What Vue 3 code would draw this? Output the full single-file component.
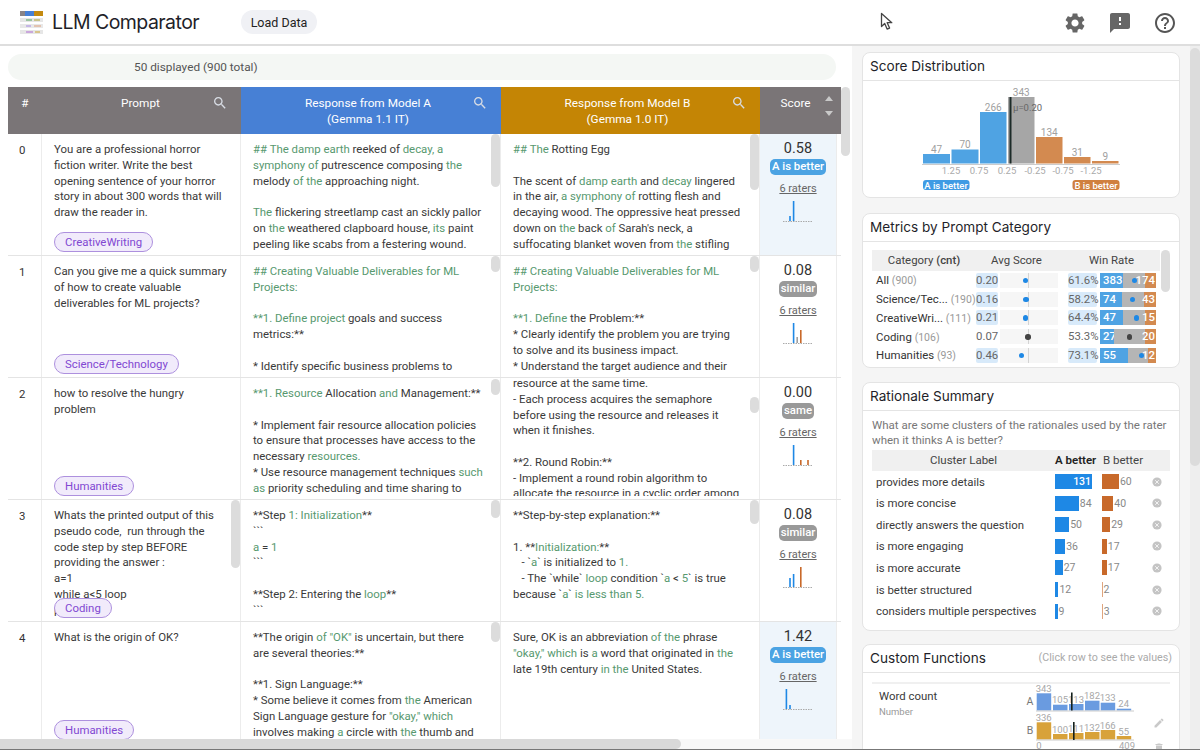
<script setup>
const searchPath = 'M15.5 14h-.79l-.28-.27C15.41 12.59 16 11.11 16 9.5 16 5.91 13.09 3 9.5 3S3 5.91 3 9.5 5.91 16 9.5 16c1.61 0 3.09-.59 4.23-1.57l.27.28v.79l5 4.99L20.49 19l-4.99-5zm-6 0C7.01 14 5 11.99 5 9.5S7.01 5 9.5 5 14 7.01 14 9.5 11.99 14 9.5 14z'

const BLUE = '#1e88e5'
const GRAY = '#a0a0a0'
const ORANGE = '#c8692a'

const rows = [
  {
    id: 0,
    prompt: 'You are a professional horror\nfiction writer. Write the best\nopening sentence of your horror\nstory in about 300 words that will\ndraw the reader in.',
    tag: 'CreativeWriting',
    a: '{## The damp earth} reeked of {decay, a}\n{symphony of} putrescence composing {the}\nmelody {of the} approaching night.\n\n{The} flickering streetlamp cast an sickly pallor\non {the} weathered clapboard house, {its} paint\npeeling like scabs from a festering wound.',
    b: '{## The} Rotting Egg\n\nThe scent of {damp earth} and {decay} lingered\nin the air, {a symphony of} rotting flesh and\ndecaying wood. The oppressive heat pressed\ndown on {the} back {of} Sarah\'s neck, a\nsuffocating blanket woven from {the} stifling',
    aBar: 53, bBar: 56,
    score: '0.58', verdict: 'A is better', kind: 'win',
    hist: [[1, 5, BLUE], [2, 20, BLUE]],
  },
  {
    id: 1,
    prompt: 'Can you give me a quick summary\nof how to create valuable\ndeliverables for ML projects?',
    tag: 'Science/Technology',
    a: '{## Creating Valuable Deliverables for ML}\n{Projects:}\n\n{**1. Define project} goals and success\nmetrics:**\n\n* Identify specific business problems to',
    b: '{## Creating Valuable Deliverables for ML}\n{Projects:}\n\n{**1. Define} the Problem:**\n* Clearly identify the problem you are trying\nto solve and its business impact.\n* Understand the target audience and their',
    aBar: 16, bBar: 16,
    score: '0.08', verdict: 'similar', kind: 'neutral',
    hist: [[2, 20, BLUE], [3, 6, GRAY], [4, 13, ORANGE]],
  },
  {
    id: 2,
    prompt: 'how to resolve the hungry\nproblem',
    tag: 'Humanities',
    a: '{**1. Resource} Allocation {and} Management:**\n\n* Implement fair resource allocation policies\nto ensure that processes have access to the\nnecessary {resources.}\n* Use resource management techniques {such}\n{as} priority scheduling and time sharing to',
    b: 'resource at the same time.\n- Each process acquires the semaphore\nbefore using the resource and releases it\nwhen it finishes.\n\n**2. Round Robin:**\n- Implement a round robin algorithm to\nallocate the resource in a cyclic order among',
    scrolled: true,
    aBar: 16, aBarTop: 1, bBar: 16, bBarTop: 19,
    score: '0.00', verdict: 'same', kind: 'neutral',
    hist: [[2, 20, BLUE], [4, 5, ORANGE], [6, 5, ORANGE]],
  },
  {
    id: 3,
    prompt: 'Whats the printed output of this\npseudo code,  run through the\ncode step by step BEFORE\nproviding the answer :\na=1\nwhile a<5 loop\nprint a',
    promptBar: 68,
    tag: 'Coding',
    a: '**Step {1: Initialization}**\n```\n{a} = {1}\n```\n\n**Step 2: Entering the {loop}**\n```',
    b: '**Step-by-step explanation:**\n\n1. **{Initialization:}**\n   - `{a}` is initialized to {1.}\n   - The `while` {loop} condition `{a} < {5}` is true\nbecause `{a}` {is less than 5.}',
    aBar: 18, bBar: 24,
    score: '0.08', verdict: 'similar', kind: 'neutral',
    hist: [[1, 9, BLUE], [2, 13, BLUE], [4, 20, ORANGE]],
  },
  {
    id: 4,
    prompt: 'What is the origin of OK?',
    tag: 'Humanities',
    a: '**The origin {of "OK"} is uncertain, but there\nare several theories:**\n\n**1. Sign Language:**\n* Some believe it comes from {the} American\nSign Language gesture for {"okay," which}\ninvolves making {a} circle with {the} thumb and',
    b: 'Sure, OK is an abbreviation {of the} phrase\n{"okay," which} is {a} word that originated in {the}\nlate 19th century {in the} United States.',
    aBar: 20,
    score: '1.42', verdict: 'A is better', kind: 'win',
    hist: [[0, 20, BLUE], [1, 4, BLUE]],
  },
]

function segments(text) {
  return text.split(/(\{[^}]*\})/).filter(Boolean).map(s =>
    s[0] === '{' ? { text: s.slice(1, -1), hi: true } : { text: s, hi: false })
}

const distBars = [
  { x: 923, w: 27, y: 153, v: '47', c: '#4fa3e3' },
  { x: 951.5, w: 27, y: 148.5, v: '70', c: '#4fa3e3' },
  { x: 980, w: 26.5, y: 111, v: '266', c: '#4fa3e3' },
  { x: 1008, w: 26.5, y: 96, v: '343', c: '#a6a6a6' },
  { x: 1036, w: 26.5, y: 136, v: '134', c: '#d38a50' },
  { x: 1064, w: 26.5, y: 156, v: '31', c: '#d38a50' },
  { x: 1092, w: 26.5, y: 160, v: '9', c: '#d38a50' },
]
const distTicks = [[951, '1.25'], [979, '0.75'], [1007, '0.25'], [1035, '-0.25'], [1063, '-0.75'], [1091, '-1.25']]

const categories = [
  { name: 'All', cnt: 900, avg: '0.20', hi: true, dot: 22.5, pct: '61.6%', a: 383, b: 174, aw: 23, bw: 11, win: 34, dark: false },
  { name: 'Science/Tec...', cnt: 190, avg: '0.16', hi: true, dot: 23, pct: '58.2%', a: 74, b: 43, aw: 22, bw: 12.5, win: 32, dark: false },
  { name: 'CreativeWri...', cnt: 111, avg: '0.21', hi: true, dot: 22.5, pct: '64.4%', a: 47, b: 15, aw: 23, bw: 11, win: 36, dark: false },
  { name: 'Coding', cnt: 106, avg: '0.07', hi: false, dot: 25, pct: '53.3%', a: 27, b: 20, aw: 14, bw: 11, win: 29, dark: true },
  { name: 'Humanities', cnt: 93, avg: '0.46', hi: true, dot: 18.5, pct: '73.1%', a: 55, b: 12, aw: 27.5, bw: 8, win: 41, dark: false },
]

const clusters = [
  { label: 'provides more details', a: 131, b: 60 },
  { label: 'is more concise', a: 84, b: 40 },
  { label: 'directly answers the question', a: 50, b: 29 },
  { label: 'is more engaging', a: 36, b: 17 },
  { label: 'is more accurate', a: 27, b: 17 },
  { label: 'is better structured', a: 12, b: 2 },
  { label: 'considers multiple perspectives', a: 9, b: 3 },
]

const wcA = [[1036.7, 693.3, '343'], [1053, 704.7, '105'], [1069, 704, '113'], [1085, 700.7, '182'], [1100.7, 702.7, '133'], [1116.7, 708.7, '24']]
const wcB = [[1036.7, 722.3, '336'], [1053, 734, '100'], [1069, 733, '111'], [1085, 732, '132'], [1100.7, 730, '166'], [1116.7, 736, '55']]
</script>

<template>
  <div class="page">
    <header class="topbar">
      <svg class="logo" width="23" height="24" viewBox="0 0 23 24">
        <rect x="0" y="0" width="5" height="5" fill="#8a8486" />
        <rect x="5" y="0" width="9" height="5" fill="#4780d5" />
        <rect x="14" y="0" width="9" height="5" fill="#c48a10" />
        <rect x="0" y="7" width="23" height="4" fill="#e6e6e6" />
        <rect x="6" y="8" width="6" height="2" fill="#9bc4a0" />
        <rect x="14" y="8" width="6" height="2" fill="#c9c48c" />
        <rect x="0" y="13" width="23" height="4" fill="#e8e8e8" />
        <rect x="6" y="14" width="5" height="2" fill="#c5b6e6" />
        <rect x="14" y="14" width="7" height="2" fill="#e3c3b0" />
        <rect x="0" y="19" width="23" height="4" fill="#e6e6e6" />
        <rect x="6" y="20" width="7" height="2" fill="#c9a6dc" />
        <rect x="15" y="20" width="5" height="2" fill="#d8c48c" />
      </svg>
      <span class="title">LLM Comparator</span>
      <button class="load">Load Data</button>
      <svg class="cursor" width="14" height="19" viewBox="0 0 14 19">
        <path d="M1.5 1.5v13l3.2-3 2.4 5.6 2.5-1-2.4-5.4h4.6z" fill="#fff" stroke="#444" stroke-width="1.3" stroke-linejoin="round" />
      </svg>
      <div class="actions">
        <svg width="24" height="24" viewBox="0 0 24 24"><path fill="#666" d="M19.14 12.94c.04-.3.06-.61.06-.94 0-.32-.02-.64-.07-.94l2.03-1.58c.18-.14.23-.41.12-.61l-1.92-3.32c-.12-.22-.37-.29-.59-.22l-2.39.96c-.5-.38-1.03-.7-1.62-.94l-.36-2.54c-.04-.24-.24-.41-.48-.41h-3.84c-.24 0-.43.17-.47.41l-.36 2.54c-.59.24-1.13.57-1.62.94l-2.39-.96c-.22-.08-.47 0-.59.22L2.74 8.87c-.12.21-.08.47.12.61l2.03 1.58c-.05.3-.09.63-.09.94s.02.64.07.94l-2.03 1.58c-.18.14-.23.41-.12.61l1.92 3.32c.12.22.37.29.59.22l2.39-.96c.5.38 1.03.7 1.62.94l.36 2.54c.05.24.24.41.48.41h3.84c.24 0 .44-.17.47-.41l.36-2.54c.59-.24 1.13-.56 1.62-.94l2.39.96c.22.08.47 0 .59-.22l1.92-3.32c.12-.22.07-.47-.12-.61l-2.01-1.58zM12 15.6c-1.98 0-3.6-1.62-3.6-3.6s1.62-3.6 3.6-3.6 3.6 1.62 3.6 3.6-1.62 3.6-3.6 3.6z" /></svg>
        <svg width="24" height="24" viewBox="0 0 24 24"><path fill="#666" d="M20 2H4c-1.1 0-1.99.9-1.99 2L2 22l4-4h14c1.1 0 2-.9 2-2V4c0-1.1-.9-2-2-2zm-7 12h-2v-2h2v2zm0-4h-2V6h2v4z" /></svg>
        <svg width="24" height="24" viewBox="0 0 24 24"><path fill="#555" d="M11 18h2v-2h-2v2zm1-16C6.48 2 2 6.48 2 12s4.48 10 10 10 10-4.48 10-10S17.52 2 12 2zm0 18c-4.41 0-8-3.59-8-8s3.59-8 8-8 8 3.59 8 8-3.59 8-8 8zm0-14c-2.21 0-4 1.79-4 4h2c0-1.1.9-2 2-2s2 .9 2 2c0 2-3 1.75-3 5h2c0-2.25 3-2.5 3-5 0-2.21-1.79-4-4-4z" /></svg>
      </div>
    </header>

    <div class="body">
      <main class="main">
        <div class="status">50 displayed (900 total)</div>
        <div class="table-area">
          <div class="table">
            <div class="thead">
              <div class="th th-id">#</div>
              <div class="th th-prompt">
                Prompt
                <svg class="search" viewBox="0 0 24 24"><path :d="searchPath" /></svg>
              </div>
              <div class="th th-a">
                <span>Response from Model A<br>(Gemma 1.1 IT)</span>
                <svg class="search" viewBox="0 0 24 24"><path :d="searchPath" /></svg>
              </div>
              <div class="th th-b">
                <span>Response from Model B<br>(Gemma 1.0 IT)</span>
                <svg class="search" viewBox="0 0 24 24"><path :d="searchPath" /></svg>
              </div>
              <div class="th th-score">
                <span class="score-label">Score</span>
                <span class="sort-up"></span>
                <span class="sort-down"></span>
              </div>
            </div>

            <div v-for="row in rows" :key="row.id" class="tr">
              <div class="td td-id">{{ row.id }}</div>
              <div class="td td-prompt">
                <div class="cell-text">{{ row.prompt }}</div>
                <span class="tag">{{ row.tag }}</span>
                <span v-if="row.promptBar" class="cell-thumb" :style="{ height: row.promptBar + 'px' }"></span>
              </div>
              <div class="td td-resp">
                <div class="cell-text"><span v-for="(s, i) in segments(row.a)" :key="i" :class="{ hi: s.hi }">{{ s.text }}</span></div>
                <span v-if="row.aBar" class="cell-thumb" :style="{ height: row.aBar + 'px', top: (row.aBarTop || 0) + 'px' }"></span>
              </div>
              <div class="td td-resp">
                <div class="cell-text" :class="{ scrolled: row.scrolled }"><span v-for="(s, i) in segments(row.b)" :key="i" :class="{ hi: s.hi }">{{ s.text }}</span></div>
                <span v-if="row.bBar" class="cell-thumb" :style="{ height: row.bBar + 'px', top: (row.bBarTop || 0) + 'px' }"></span>
              </div>
              <div class="td td-score" :class="{ winner: row.kind === 'win' }">
                <div class="score-num">{{ row.score }}</div>
                <span class="verdict" :class="row.kind">{{ row.verdict }}</span>
                <div class="raters">6 raters</div>
                <svg class="mini" width="32" height="24" viewBox="0 0 32 24">
                  <line x1="0" y1="22.5" x2="30" y2="22.5" stroke="#aaa" stroke-width="1" stroke-dasharray="1.5 1" />
                  <rect v-for="h in row.hist" :key="h[0]" :x="2.6 + h[0] * 3.6" :y="22 - h[1]" width="1.6" :height="h[1]" :fill="h[2]" />
                </svg>
              </div>
            </div>
          </div>
          <div class="table-scroll"><span class="table-thumb"></span></div>
        </div>
        <div class="hscroll"><span class="hthumb"></span></div>
      </main>

      <aside class="side">
        <div class="side-col">
          <section class="card card-dist">
            <h3 class="card-title">Score Distribution</h3>
            <svg class="dist" width="316" height="117" viewBox="863 80 316 117">
              <g v-for="b in distBars" :key="b.v">
                <rect :x="b.x" :y="b.y" :width="b.w" :height="162.5 - b.y" :fill="b.c" />
                <text :x="b.x + b.w / 2" :y="b.y - 1.5" class="dist-val">{{ b.v }}</text>
              </g>
              <line x1="922" y1="163.5" x2="1120" y2="163.5" stroke="#ccc" stroke-width="1.2" />
              <rect x="1009.5" y="96" width="2" height="66.5" fill="#1c2b28" />
              <text x="1013" y="110" class="mu">μ=0.20</text>
              <text v-for="t in distTicks" :key="t[1]" :x="t[0]" y="173" class="dist-tick">{{ t[1] }}</text>
              <rect x="923" y="179" width="46.5" height="10" rx="3" fill="#3f9be4" />
              <text x="946" y="187.5" class="pill-text">A is better</text>
              <rect x="1072.5" y="179" width="47" height="10" rx="3" fill="#d0803f" />
              <text x="1096" y="187.5" class="pill-text">B is better</text>
            </svg>
          </section>

          <section class="card card-metrics">
            <h3 class="card-title">Metrics by Prompt Category</h3>
            <div class="metrics-wrap">
              <div class="metrics">
                <div class="m-head">
                  <span class="m-h1">Category <b>(cnt)</b></span>
                  <span class="m-h2">Avg Score</span>
                  <span class="m-h3">Win Rate</span>
                </div>
                <div v-for="c in categories" :key="c.name" class="m-row">
                  <span class="m-name"><span class="m-label">{{ c.name }}</span> <span class="m-cnt">({{ c.cnt }})</span></span>
                  <span class="m-avg" :class="{ soft: c.hi }">{{ c.avg }}</span>
                  <span class="m-track">
                    <i class="m-center"></i>
                    <i class="m-dot" :class="{ dark: c.dark }" :style="{ left: c.dot + 'px' }"></i>
                  </span>
                  <span class="m-pct" :class="{ soft: c.hi }">{{ c.pct }}</span>
                  <span class="m-win">
                    <b class="seg seg-a" :style="{ width: c.aw + 'px' }">{{ c.a }}</b>
                    <b class="seg seg-mid"></b>
                    <b class="seg seg-b" :style="{ width: c.bw + 'px' }"></b>
                    <em class="seg-num">{{ c.b }}</em>
                    <i class="m-dot" :class="{ dark: c.dark }" :style="{ left: c.win - 2.5 + 'px' }"></i>
                  </span>
                </div>
              </div>
              <span class="metrics-thumb"></span>
            </div>
          </section>

          <section class="card card-rationale">
            <h3 class="card-title">Rationale Summary</h3>
            <p class="question">What are some clusters of the rationales used by the rater<br>when it thinks A is better?</p>
            <div class="r-head">
              <span class="r-h1">Cluster Label</span>
              <b class="r-h2">A better</b>
              <span class="r-h3">B better</span>
            </div>
            <div v-for="c in clusters" :key="c.label" class="r-row">
              <span class="r-label">{{ c.label }}</span>
              <span class="r-cell">
                <span class="r-bar r-a" :style="{ width: c.a * 0.283 + 'px' }"><em v-if="c.a > 100">{{ c.a }}</em></span>
                <em v-if="c.a <= 100" class="r-val">{{ c.a }}</em>
              </span>
              <span class="r-cell">
                <span class="r-bar r-b" :class="{ faint: c.b < 4 }" :style="{ width: c.b * 0.283 + 'px' }"></span>
                <em class="r-val">{{ c.b }}</em>
              </span>
              <svg class="r-close" width="10" height="10" viewBox="0 0 10 10">
                <circle cx="5" cy="5" r="4.6" fill="#c4c4c4" />
                <path d="M3.2 3.2l3.6 3.6M6.8 3.2l-3.6 3.6" stroke="#f2f2f2" stroke-width="1" />
              </svg>
            </div>
          </section>

          <section class="card card-custom">
            <div class="custom-head">
              <h3 class="card-title">Custom Functions</h3>
              <span class="hint">(Click row to see the values)</span>
            </div>
            <div class="custom-band"></div>
            <div class="custom-row">
              <div class="wc">
                <div class="wc-name">Word count</div>
                <div class="wc-type">Number</div>
              </div>
              <svg class="wc-chart" width="116" height="66" viewBox="1026 684 116 66">
                <text x="1030" y="705" class="wc-ab">A</text>
                <text x="1030" y="734" class="wc-ab">B</text>
                <g v-for="b in wcA" :key="b[2]">
                  <rect :x="b[0]" :y="b[1]" width="14.5" :height="710.5 - b[1]" fill="#6a9be0" />
                  <text :x="b[0] + 7" :y="b[1] - 1.5" class="wc-val">{{ b[2] }}</text>
                </g>
                <g v-for="b in wcB" :key="b[2]">
                  <rect :x="b[0]" :y="b[1]" width="14.5" :height="739.5 - b[1]" fill="#d8a23a" />
                  <text :x="b[0] + 7" :y="b[1] - 1.5" class="wc-val">{{ b[2] }}</text>
                </g>
                <line x1="1036" y1="711" x2="1134" y2="711" stroke="#ccc" />
                <line x1="1036" y1="740" x2="1134" y2="740" stroke="#ccc" />
                <rect x="1071" y="692.5" width="1.6" height="18" fill="#14201c" />
                <rect x="1073" y="722" width="1.6" height="18" fill="#14201c" />
                <text x="1039" y="749" class="wc-val">0</text>
                <text x="1127" y="749" class="wc-val">409</text>
              </svg>
              <svg class="pencil" width="12" height="12" viewBox="0 0 24 24"><path fill="#c9c9c9" d="M3 17.25V21h3.75L17.81 9.94l-3.75-3.75L3 17.25zM20.71 7.04c.39-.39.39-1.02 0-1.41l-2.34-2.34c-.39-.39-1.02-.39-1.41 0l-1.83 1.83 3.75 3.75 1.83-1.83z" /></svg>
              <svg class="trash" width="12" height="12" viewBox="0 0 24 24"><path fill="#c9c9c9" d="M6 19c0 1.1.9 2 2 2h8c1.1 0 2-.9 2-2V7H6v12zM19 4h-3.5l-1-1h-5l-1 1H5v2h14V4z" /></svg>
            </div>
          </section>
        </div>
        <div class="side-scroll"><span class="side-thumb"></span></div>
      </aside>
    </div>
  </div>
</template>

<style>
html, body {
  margin: 0;
  background: #fff;
}
</style>

<style scoped>
.page {
  width: 1200px;
  height: 750px;
  overflow: hidden;
  display: flex;
  flex-direction: column;
  font-family: Roboto, "Liberation Sans", sans-serif;
  font-size: 11.4px;
  color: #333;
  border-bottom: 1px solid #777;
  box-sizing: border-box;
}

/* top bar */
.topbar {
  height: 46px;
  flex: none;
  box-sizing: border-box;
  border-bottom: 2px solid #dedede;
  display: flex;
  align-items: center;
  padding-left: 20px;
  position: relative;
}
.logo {
  margin-top: 1px;
}
.title {
  font-family: Inter, Roboto, sans-serif;
  font-size: 19.5px;
  color: #1f1f2a;
  margin-left: 9px;
  width: 189px;
  letter-spacing: -0.55px;
}
.load {
  width: 76px;
  height: 24px;
  border: none;
  border-radius: 12px;
  background: #f0f1f5;
  color: #222;
  font: 400 12.5px Roboto, sans-serif;
  padding: 0;
}
.cursor {
  position: absolute;
  left: 880px;
  top: 12px;
}
.actions {
  position: absolute;
  left: 1063px;
  top: 11px;
  display: flex;
  gap: 21px;
}

.body {
  flex: 1;
  display: flex;
  min-height: 0;
}

/* left column */
.main {
  width: 852px;
  flex: none;
  display: flex;
  flex-direction: column;
}
.status {
  margin: 8px 16px 7px 8px;
  height: 26px;
  flex: none;
  line-height: 27px;
  padding-left: 126px;
  background: #f4f7f4;
  border-radius: 13px;
  color: #555;
  font-size: 11.8px;
}
.table-area {
  flex: 1;
  min-height: 0;
  display: flex;
  padding-left: 8px;
  overflow: hidden;
}
.table {
  width: 833px;
  flex: none;
}
.thead {
  display: flex;
  height: 47px;
  color: #fff;
  line-height: 16px;
  font-size: 11.8px;
}
.th {
  position: relative;
  display: flex;
  align-items: center;
  justify-content: center;
  text-align: center;
  box-sizing: border-box;
}
.th-id, .th-prompt, .th-score {
  background: #7a7577;
  padding-bottom: 15px;
}
.th-id { width: 34px; }
.th-prompt { width: 199px; padding-right: 2px; }
.th-a { width: 260px; background: #4780d5; }
.th-b { width: 259px; background: #c48505; }
.th-a, .th-b { padding-right: 6px; }
.th-score { width: 81px; padding-right: 10px; }
.search {
  position: absolute;
  right: 13px;
  top: 8px;
  width: 16px;
  height: 16px;
  fill: #d8dce4;
}
.sort-up, .sort-down {
  position: absolute;
  left: 65px;
  width: 0;
  height: 0;
  border-left: 4.5px solid transparent;
  border-right: 4.5px solid transparent;
}
.sort-up { top: 9px; border-bottom: 5px solid #c9c9c9; }
.sort-down { top: 24px; border-top: 5px solid #c9c9c9; }

.tr {
  display: flex;
  height: 122px;
  box-sizing: border-box;
  border-bottom: 1.5px solid #e4e4e4;
}
.td {
  position: relative;
  box-sizing: border-box;
  overflow: hidden;
  padding-top: 8px;
  border-right: 1px solid #ececec;
}
.td-id {
  width: 34px;
  padding-left: 11px;
  line-height: 16px;
}
.td-prompt {
  width: 199px;
  padding-left: 12px;
}
.td-resp {
  width: 260px;
  padding-left: 12px;
}
.td-resp + .td-resp {
  width: 259px;
}
.cell-text {
  white-space: pre;
  line-height: 15.75px;
  color: #3a3a3a;
}
.scrolled {
  margin-top: -10px;
  height: 120px;
  overflow: hidden;
}
.hi {
  color: #57996f;
}
.tag {
  position: absolute;
  left: 12px;
  bottom: 3px;
  height: 20px;
  line-height: 18px;
  box-sizing: border-box;
  padding: 0 10px;
  border: 1px solid #ad90de;
  border-radius: 10px;
  background: #f1ebfb;
  color: #8148d2;
}
.cell-thumb {
  position: absolute;
  right: 0;
  top: 0;
  width: 9px;
  background: #dcdcdc;
  border-radius: 5px;
}
.td-score {
  width: 77px;
  padding-top: 6px;
  text-align: center;
  overflow: visible;
  padding-right: 0;
}
.td-score.winner {
  background: #eef5fb;
}
.score-num {
  font-size: 14.5px;
  line-height: 18px;
  color: #333;
}
.verdict {
  display: inline-block;
  height: 16px;
  line-height: 15px;
  padding: 0 2px;
  border-radius: 5px;
  color: #fff;
  font-weight: 500;
  margin-top: 1px;
}
.verdict.win { background: #4ba3e3; }
.verdict.neutral { background: #999; }
.raters {
  margin-top: 7px;
  font-size: 11px;
  line-height: 14px;
  color: #666;
  text-decoration: underline;
}
.mini {
  display: block;
  margin: 3px 0 0 23px;
}
.table-scroll {
  width: 9px;
  margin-left: 0;
  flex: none;
}
.table-thumb {
  display: block;
  height: 69px;
  background: #dcdcdc;
  border-radius: 5px;
}
.hscroll {
  height: 10px;
  flex: none;
  background: #f8f8f8;
}
.hthumb {
  display: block;
  width: 681px;
  height: 10px;
  background: #d9d9d9;
  border-radius: 0 5px 5px 0;
}

/* right column */
.side {
  flex: 1;
  display: flex;
  background: #f5f5f5;
  min-width: 0;
}
.side-col {
  width: 338px;
  flex: none;
  box-sizing: border-box;
  padding: 6px 10px 0;
  overflow: hidden;
}
.side-scroll {
  width: 10px;
  flex: none;
  background: #eeeeee;
}
.side-thumb {
  display: block;
  height: 418px;
  margin-top: 2px;
  background: #dcdcdc;
  border-radius: 5px;
}
.card {
  background: #fff;
  border: 1px solid #e4e4e4;
  border-radius: 8px;
  box-sizing: border-box;
  margin-bottom: 15px;
  width: 318px;
}
.card-title {
  margin: 0;
  font-family: Inter, Roboto, sans-serif;
  font-weight: 400;
  font-size: 13.6px;
  line-height: 26px;
  height: 27px;
  padding-left: 7px;
  color: #1f1f2a;
  border-bottom: 1px solid #e4e4e4;
}
.card-dist { height: 146px; }
.dist {
  display: block;
}
.dist-val {
  font-size: 10px;
  fill: #a0a0a0;
  text-anchor: middle;
}
.dist-tick {
  font-size: 9.5px;
  fill: #aaa;
  text-anchor: middle;
}
.mu {
  font-size: 9.5px;
  fill: #666;
}
.pill-text {
  font-size: 9.5px;
  font-weight: 500;
  fill: #fff;
  text-anchor: middle;
}

/* metrics table */
.card-metrics { height: 155px; margin-bottom: 14px; }
.metrics-wrap {
  display: flex;
  padding: 8px 0 0 9px;
}
.metrics {
  width: 288px;
  flex: none;
}
.metrics-thumb {
  width: 9px;
  height: 42px;
  margin-left: 1px;
  background: #dcdcdc;
  border-radius: 5px;
}
.m-head {
  display: flex;
  height: 21px;
  line-height: 21px;
  background: #f0f0f0;
  color: #444;
}
.m-h1 { width: 104px; text-align: center; }
.m-h1 b { font-weight: 500; }
.m-h2 { width: 81px; text-align: center; }
.m-h3 { width: 103px; text-align: center; padding-left: 6px; box-sizing: border-box; }
.m-row {
  display: flex;
  align-items: center;
  height: 18.75px;
}
.m-name {
  width: 104px;
  flex: none;
  padding-left: 4px;
  box-sizing: border-box;
  white-space: nowrap;
  overflow: hidden;
}
.m-label { color: #333; }
.m-cnt { color: #999; font-size: 10.5px; }
.m-avg {
  width: 22px;
  flex: none;
  text-align: center;
  color: #666;
  line-height: 15px;
}
.m-track {
  position: relative;
  width: 58px;
  height: 15px;
  margin-left: 2px;
  flex: none;
  background: #f6f6f6;
}
.m-center {
  position: absolute;
  left: 28px;
  top: 0;
  width: 1px;
  height: 15px;
  background: #d4d4d4;
}
.m-dot {
  position: absolute;
  top: 5px;
  width: 5.5px;
  height: 5.5px;
  border-radius: 50%;
  background: #1e88e5;
}
.m-dot.dark { background: #444; }
.m-pct {
  width: 29px;
  margin-left: 10px;
  flex: none;
  text-align: center;
  color: #666;
  line-height: 15px;
}
.soft { background: #d8eafa; border-radius: 2px; }
.m-win {
  position: relative;
  display: flex;
  width: 56px;
  height: 15px;
  margin-left: 3px;
  flex: none;
  line-height: 15px;
  color: #fff;
}
.seg { display: block; font-weight: 500; padding-left: 3px; box-sizing: border-box; }
.seg-a { background: #4fa3e3; }
.seg-mid { flex: 1; background: #b5b5b5; padding: 0; }
.seg-b { background: #d38a50; padding: 0; }
.seg-num {
  position: absolute;
  right: 1px;
  top: 0;
  font-style: normal;
  font-weight: 500;
}

/* rationale table */
.card-rationale { height: 249px; margin-bottom: 13px; }
.question {
  margin: 7px 0 0 9px;
  line-height: 14.5px;
  color: #777;
  font-size: 11.5px;
  white-space: nowrap;
}
.r-head {
  display: flex;
  height: 21px;
  line-height: 21px;
  margin: 3px 9px 0;
  background: #f0f0f0;
  font-size: 11.5px;
  color: #444;
}
.r-h1 { width: 183px; text-align: center; }
.r-h2 { width: 48px; font-weight: 600; color: #222; }
.r-h3 { color: #444; }
.r-row {
  display: flex;
  align-items: center;
  height: 21.55px;
  margin-left: 13px;
  position: relative;
}
.r-label { width: 179px; flex: none; color: #3a3a3a; }
.r-cell {
  width: 47px;
  flex: none;
  display: flex;
  align-items: center;
}
.r-bar {
  display: block;
  height: 15px;
  text-align: right;
  color: #fff;
  font-size: 10.5px;
  line-height: 15px;
}
.r-bar em { font-style: normal; font-weight: 500; padding-right: 1px; }
.r-a { background: #1e88e5; }
.r-b { background: #c8692a; }
.r-b.faint { background: #dfa47e; }
.r-val {
  font-style: normal;
  font-size: 10.5px;
  color: #888;
  margin-left: 1px;
}
.r-close {
  margin-left: 3px;
  flex: none;
}

/* custom functions */
.card-custom { height: 130px; margin-bottom: 0; overflow: hidden; }
.custom-head {
  display: flex;
  justify-content: space-between;
  border-bottom: 1px solid #e4e4e4;
}
.custom-head .card-title { border-bottom: none; }
.hint {
  color: #aaa;
  line-height: 26px;
  padding-right: 7px;
  font-size: 10.7px;
}
.custom-band {
  height: 2px;
  margin: 9px 9px 0;
  background: #f0f0f0;
}
.custom-row {
  display: flex;
  position: relative;
}
.wc {
  width: 163px;
  box-sizing: border-box;
  padding: 4px 0 0 16px;
  flex: none;
}
.wc-name { color: #3a3a3a; line-height: 16px; }
.wc-type { color: #999; font-size: 9.5px; line-height: 16px; }
.wc-ab { font-size: 10.5px; fill: #777; text-anchor: middle; }
.wc-val { font-size: 9.5px; fill: #a8a8a8; text-anchor: middle; }
.wc-chart { display: block; }
.pencil {
  position: absolute;
  left: 290px;
  top: 33px;
}
.trash {
  position: absolute;
  left: 290px;
  top: 58px;
}
</style>
